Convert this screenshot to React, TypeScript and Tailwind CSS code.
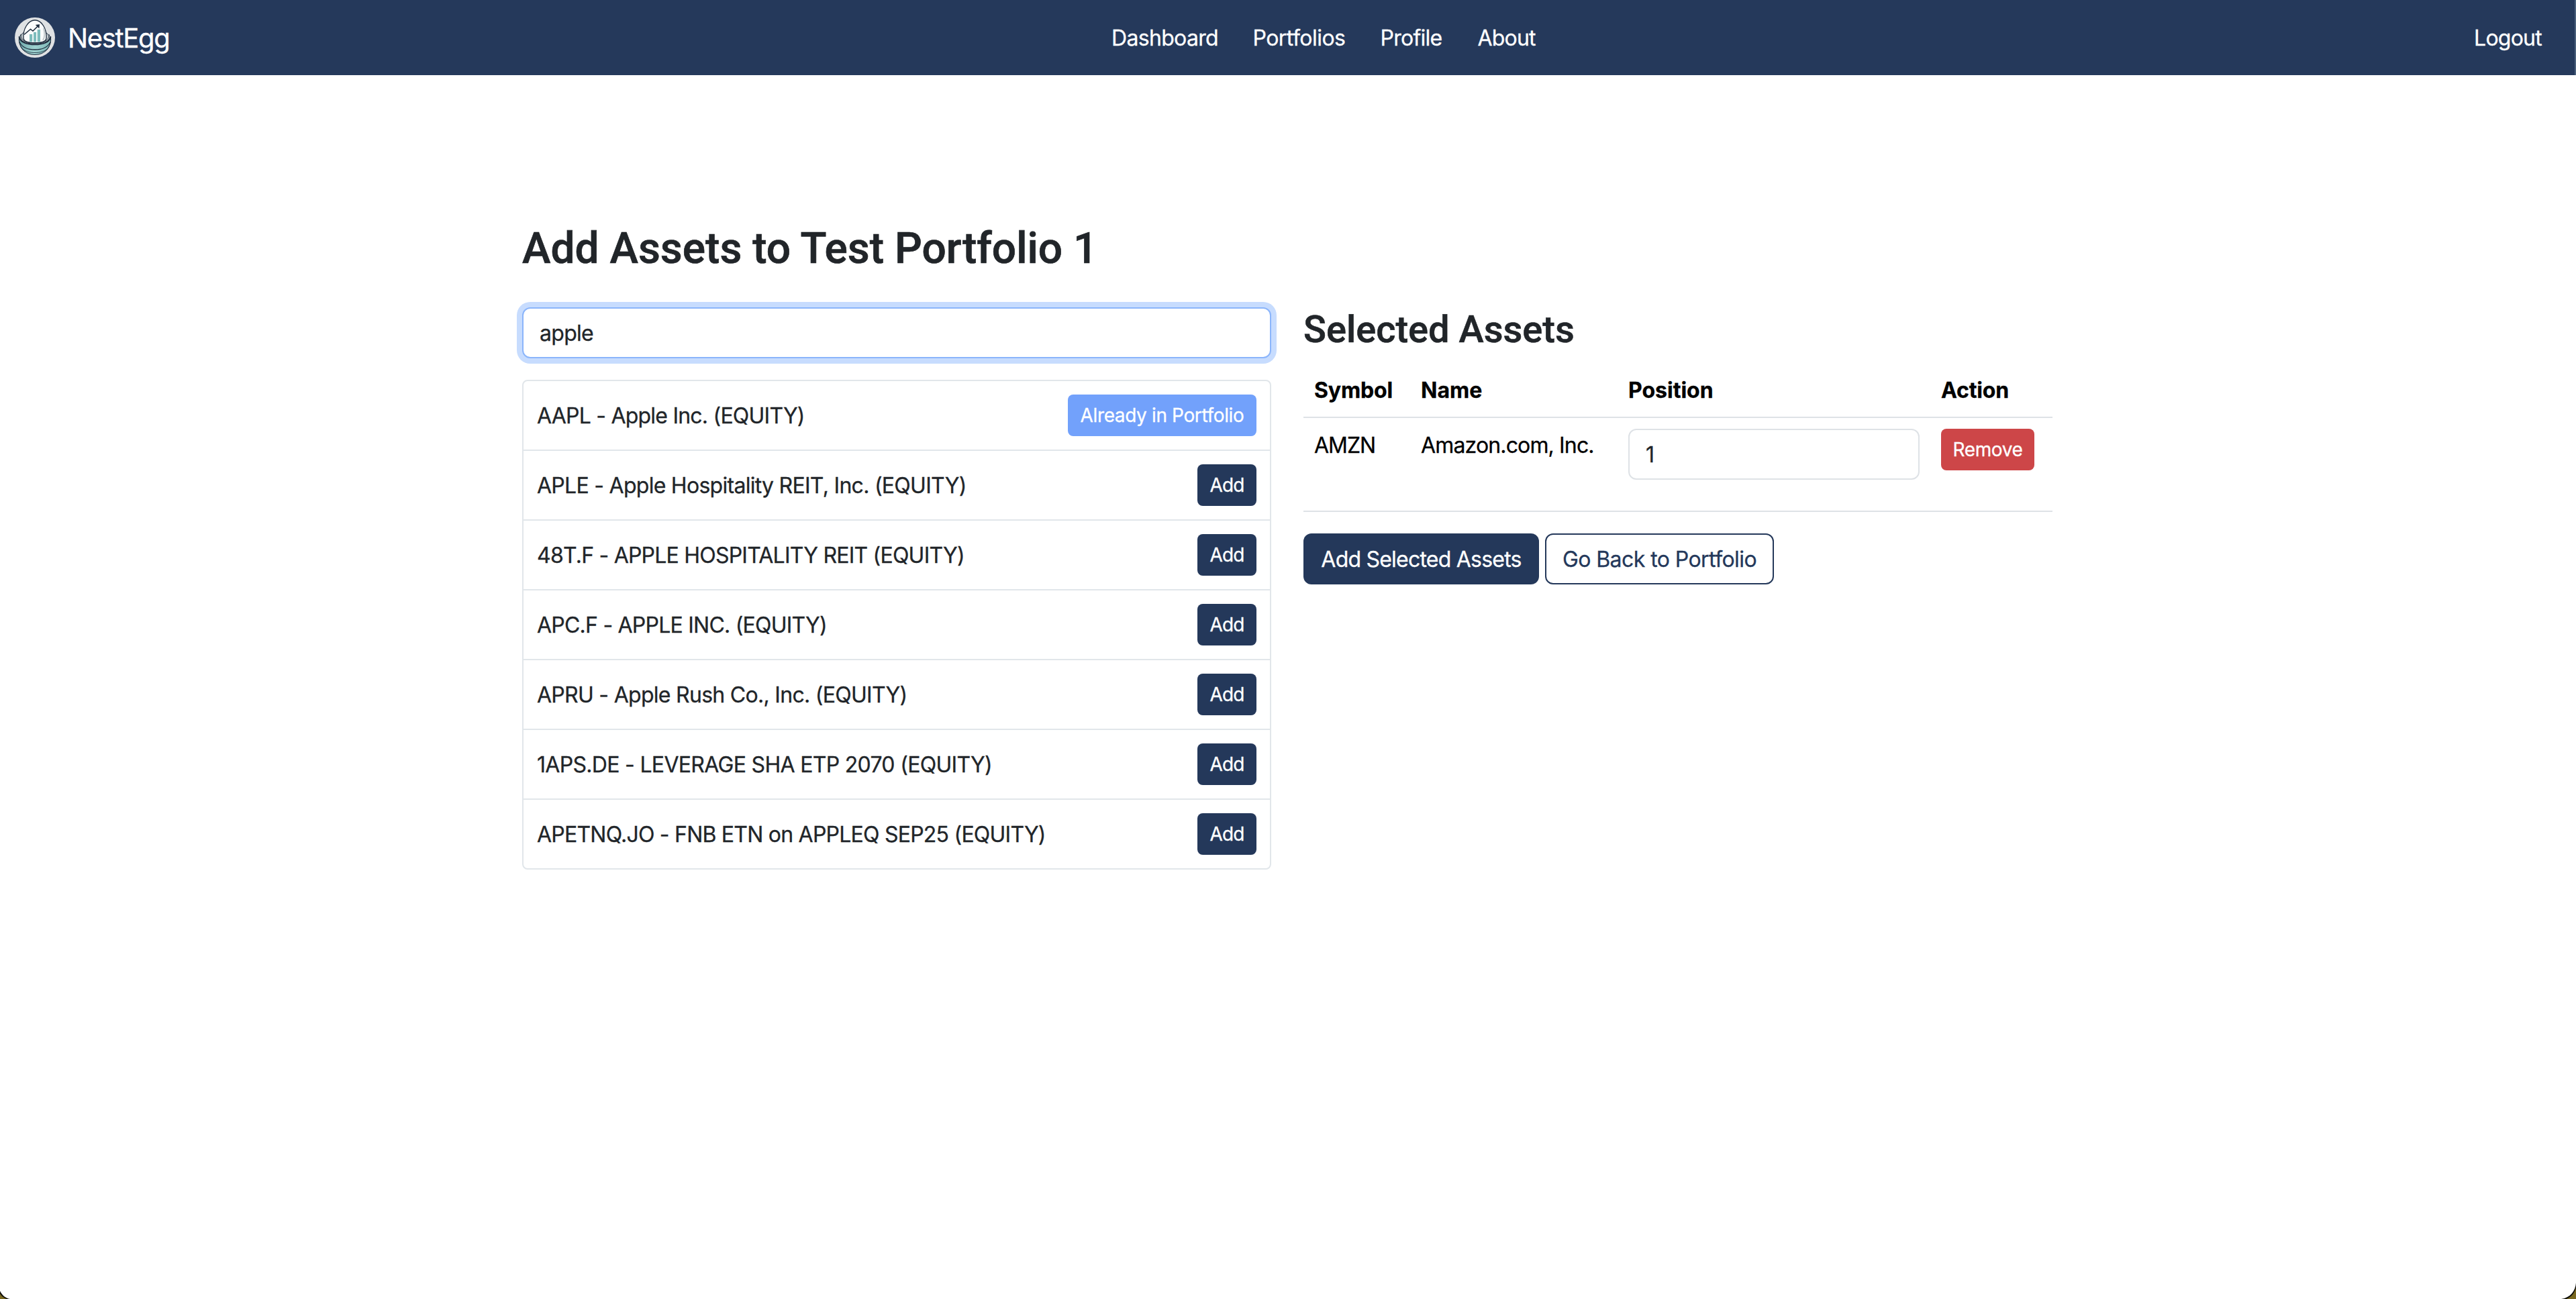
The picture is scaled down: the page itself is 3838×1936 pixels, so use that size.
import React from "react";

type Asset = { label: string; tracking: string; owned?: boolean };

const results: Asset[] = [
  { label: "AAPL - Apple Inc. (EQUITY)", tracking: "pt-[2px] tracking-[-0.78px]", owned: true },
  { label: "APLE - Apple Hospitality REIT, Inc. (EQUITY)", tracking: "pt-[2px] tracking-[-0.72px]" },
  { label: "48T.F - APPLE HOSPITALITY REIT (EQUITY)", tracking: "pt-[2px] tracking-[-0.78px]" },
  { label: "APC.F - APPLE INC. (EQUITY)", tracking: "pt-[2px] tracking-[-0.77px]" },
  { label: "APRU - Apple Rush Co., Inc. (EQUITY)", tracking: "pt-[2px] tracking-[-0.71px]" },
  { label: "1APS.DE - LEVERAGE SHA ETP 2070 (EQUITY)", tracking: "pt-[2px] tracking-[-0.69px]" },
  { label: "APETNQ.JO - FNB ETN on APPLEQ SEP25 (EQUITY)", tracking: "pt-[2px] tracking-[-0.77px]" },
];

function Logo() {
  return (
    <svg className="size-[60px] shrink-0" viewBox="0 0 60 60" fill="none">
      <defs>
        <clipPath id="disc">
          <circle cx="30" cy="30" r="30" />
        </clipPath>
        <linearGradient id="bowl" x1="6" y1="40" x2="54" y2="50" gradientUnits="userSpaceOnUse">
          <stop stopColor="#6fa9ab" />
          <stop offset="0.5" stopColor="#9fd2d0" />
          <stop offset="1" stopColor="#79b3b4" />
        </linearGradient>
      </defs>
      <g clipPath="url(#disc)">
        <rect width="60" height="60" fill="#dfe1e3" />
        <path d="M6 29C5 43 14 55.500 30 55.500S55 43 54 29c-5 8-14 12-24 12S11 37 6 29Z" fill="url(#bowl)" />
        <path d="M9 24C5 31 11 37 20 39c7 1.500 13 1.500 20 0 9-2 15-8 11-15l-4 0-34 0Z" fill="#c9d0d3" />
        <path d="M13 31C12 17 20 4 30 4s18 13 17 27c-1 6-8 7-17 7s-16-1-17-7Z" fill="#fbfcfc" stroke="#1d2b3c" strokeWidth="1.3" />
        <path d="M43 16c2 7 2 13-1 18" stroke="#c3cacd" strokeWidth="2" />
        <g fill="#7dbcbc">
          <rect x="22" y="25" width="4.200" height="11.500" />
          <rect x="28" y="22" width="4" height="14.500" />
          <rect x="33.700" y="18" width="4.300" height="18.500" />
        </g>
        <path d="M14 25.500 23.500 17.500 27 20.300 35 12.200" stroke="#1d2b3c" strokeWidth="1.5" />
        <path d="M30.800 11 37 10.300 36.400 16.400Z" fill="#1d2b3c" />
        <g stroke="#1d2b3c" strokeLinecap="round">
          <path d="M12.500 23C6 27 10 34 18 36.500c8 2 16 2 24 0 8-2.500 12-9 5-13.500" strokeWidth="1" />
          <path d="M9 25.500C5 31 11 36.500 20 38.300c7 1.200 13 1.200 20 0 9-1.800 15-7.300 11-12.800" strokeWidth="1" />
          <path d="M6.500 29C8 37 18 40.500 30 40.500s22-3.500 23.500-11.500" strokeWidth="1.700" />
          <path d="M7 37C12 46 20 48 30 48S48 46 53 37" strokeWidth="1.300" />
          <path d="M11 46.500c5 4.500 11 6 19 6s14-1.500 19-6" strokeWidth="0.800" />
          <path d="M6.500 29C5 43 14 55.500 30 55.500S55 43 53.500 29" strokeWidth="1.100" />
        </g>
      </g>
    </svg>
  );
}

function Navbar() {
  return (
    <nav className="flex h-[112px] items-center border-r-2 border-[#4a607b] bg-[#25395b] pl-[22px] pr-[49px] text-white">
      <a className="flex w-[1634px] items-center gap-[19px]">
        <Logo />
        <span className="pt-[2px] text-[40px] leading-[60px] tracking-[-1.35px]">NestEgg</span>
      </a>
      <a className="w-[210.500px] pt-[2px] tracking-[-0.68px]">Dashboard</a>
      <a className="w-[190px] pt-[2px] tracking-[-0.55px]">Portfolios</a>
      <a className="w-[145px] pt-[2px] tracking-[-0.75px]">Profile</a>
      <a className="pt-[2px] tracking-[-0.8px]">About</a>
      <a className="ml-auto pt-[2px] tracking-[-0.76px]">Logout</a>
    </nav>
  );
}

function SearchPanel() {
  return (
    <section className="w-[1116px]">
      <input
        className="block h-[76px] w-full rounded-[12px] border-2 border-[#8bb5fb] bg-white px-6 tracking-[-0.7px] shadow-[0_0_0_8px_#c7dcfe] outline-none"
        defaultValue="apple"
      />
      <ul className="mt-8 divide-y-2 divide-[#e1e6ea] rounded-[8px] border-2 border-[#e1e6ea]">
        {results.map((asset) => (
          <li key={asset.label} className="flex items-center justify-between p-5">
            <span className={asset.tracking}>{asset.label}</span>
            {asset.owned ? (
              <button className="flex h-[62px] w-[281px] items-center justify-center whitespace-nowrap rounded-[8px] bg-[#72a1fb] text-[28px] leading-[42px] tracking-[-0.37px] text-white">
                Already in Portfolio
              </button>
            ) : (
              <button className="flex h-[62px] w-[88px] items-center justify-center rounded-[8px] bg-[#24385a] text-[28px] leading-[42px] tracking-[-0.8px] text-white">
                Add
              </button>
            )}
          </li>
        ))}
      </ul>
    </section>
  );
}

function SelectedPanel() {
  return (
    <section className="w-[1116px]">
      <h2 className="mb-4 font-['Roboto',sans-serif] text-[56px] font-medium leading-[67.200px] [-webkit-text-stroke:0.6px]">
        Selected Assets
      </h2>
      <table className="w-full table-fixed border-separate border-spacing-0 text-left text-black">
        <colgroup>
          <col className="w-[159px]" />
          <col className="w-[309px]" />
          <col className="w-[466px]" />
          <col className="w-[182px]" />
        </colgroup>
        <thead>
          <tr>
            <th className="border-b-2 border-[#dee2e6] px-4 pb-[15px] pt-[17px] tracking-[-0.15px]">Symbol</th>
            <th className="border-b-2 border-[#dee2e6] px-4 pb-[15px] pt-[17px]">Name</th>
            <th className="border-b-2 border-[#dee2e6] px-4 pb-[15px] pt-[17px]">Position</th>
            <th className="border-b-2 border-[#dee2e6] px-4 pb-[15px] pt-[17px] tracking-[-0.15px]">Action</th>
          </tr>
        </thead>
        <tbody className="align-top">
          <tr>
            <td className="border-b-2 border-[#dee2e6] px-4 pt-[17px] tracking-[-1px]">AMZN</td>
            <td className="whitespace-nowrap border-b-2 border-[#dee2e6] px-4 pt-[17px] tracking-[-0.85px]">Amazon.com, Inc.</td>
            <td className="border-b-2 border-[#dee2e6] p-4">
              <input
                className="mb-[30px] block h-[76px] w-full rounded-[12px] border-2 border-[#dee2e6] bg-white px-6 text-[#212529] outline-none"
                defaultValue="1"
              />
            </td>
            <td className="border-b-2 border-[#dee2e6] p-4">
              <button className="flex h-[62px] w-[139px] items-center justify-center rounded-[8px] bg-[#cd4648] text-[28px] leading-[42px] tracking-[-0.4px] text-white">
                Remove
              </button>
            </td>
          </tr>
        </tbody>
      </table>
      <div className="mt-8 flex gap-[9px]">
        <button className="flex h-[76px] w-[351px] items-center justify-center whitespace-nowrap rounded-[12px] bg-[#24385a] pt-[2px] tracking-[-0.78px] text-white">
          Add Selected Assets
        </button>
        <button className="flex h-[76px] w-[341px] items-center justify-center whitespace-nowrap rounded-[12px] border-2 border-[#24385a] pt-[2px] tracking-[-0.57px] text-[#24385a]">
          Go Back to Portfolio
        </button>
      </div>
    </section>
  );
}

export default function App() {
  return (
    <div className="relative h-[1936px] w-full overflow-hidden bg-white font-['Inter',sans-serif] text-[32px] leading-[48px] text-[#212529] [-webkit-text-stroke:0.3px]">
      <Navbar />
      <main className="mx-auto mt-[221px] w-[2282px]">
        <h1 className="font-['Roboto',sans-serif] text-[64px] font-medium leading-[76px] [-webkit-text-stroke:0.7px]">
          Add Assets to Test Portfolio 1
        </h1>
        <div className="mt-[49px] flex gap-12">
          <SearchPanel />
          <SelectedPanel />
        </div>
      </main>
      <svg className="absolute bottom-0 left-0 size-6" viewBox="0 0 24 24">
        <path d="M0 12C3 18 8 23 15 24H0Z" fill="#0b0b08" />
        <path d="M0 16C2 19.500 5.500 22.500 10 24H0Z" fill="#77661f" />
      </svg>
      <svg className="absolute bottom-0 right-0 size-6" viewBox="0 0 24 24">
        <path d="M24 0C23 12 16 22 2 24H24Z" fill="#0b0b08" />
        <path d="M24 7C22 15 17 21 9.500 24H24Z" fill="#77661f" />
      </svg>
    </div>
  );
}
